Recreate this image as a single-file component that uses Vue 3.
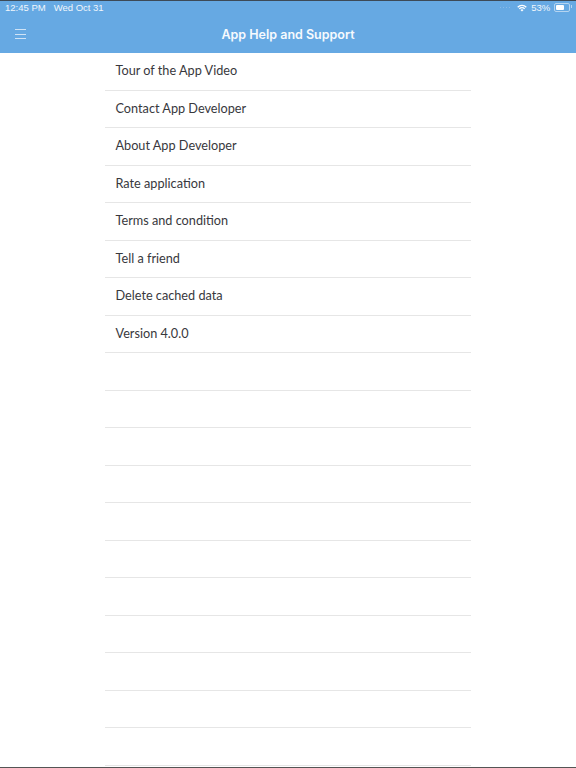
<script setup>
const items = [
  'Tour of the App Video',
  'Contact App Developer',
  'About App Developer',
  'Rate application',
  'Terms and condition',
  'Tell a friend',
  'Delete cached data',
  'Version 4.0.0',
  '', '', '', '', '', '', '', '', '', '', ''
]
</script>

<template>
  <div class="screen">
    <header class="header">
      <div class="status-bar">
        <div class="status-left">
          <span>12:45 PM</span>
          <span>Wed Oct 31</span>
        </div>
        <div class="status-right">
          <span class="signal">
            <i></i><i></i><i></i><i></i>
          </span>
          <svg class="wifi" width="10" height="8" viewBox="0 0 12 9">
            <path d="M0.3 3.1A8 8 0 0 1 11.7 3.1L10.6 4.2A6.4 6.4 0 0 0 1.4 4.2Z" fill="#fff" />
            <path d="M2.2 5A5.3 5.3 0 0 1 9.8 5L8.7 6.1A3.8 3.8 0 0 0 3.3 6.1Z" fill="#fff" />
            <path d="M4.1 6.9A2.7 2.7 0 0 1 7.9 6.9L6 8.8Z" fill="#fff" />
          </svg>
          <span class="percent">53%</span>
          <span class="battery"><span class="battery-level"></span></span>
        </div>
      </div>
      <div class="nav-bar">
        <button class="menu-btn" aria-label="Menu">
          <span></span><span></span><span></span>
        </button>
        <h1 class="title">App Help and Support</h1>
      </div>
    </header>

    <ul class="list">
      <li v-for="(item, i) in items" :key="i" class="row">{{ item }}</li>
    </ul>
  </div>
</template>

<style scoped>
.screen {
  position: relative;
  width: 576px;
  height: 768px;
  overflow: hidden;
  background-color: #fff;
  border-bottom: 1px solid #555;
  box-sizing: border-box;
  font-family: Lato, "Open Sans", sans-serif;
}

.header {
  height: 53px;
  background-color: #66a9e3;
  border-top: 1px solid #3d4a57;
  box-sizing: border-box;
  color: #fff;
}

.status-bar {
  display: flex;
  align-items: center;
  justify-content: space-between;
  height: 13px;
  padding: 0 5px;
  font-family: "Liberation Sans", sans-serif;
  font-size: 9.5px;
  color: #f0f6fc;
}

.status-left {
  display: flex;
  gap: 8px;
}

.status-right {
  display: flex;
  align-items: center;
  gap: 4px;
}

.signal {
  display: flex;
  gap: 1.5px;
  margin-right: 3px;
}

.signal i {
  width: 1.5px;
  height: 1.5px;
  border-radius: 50%;
  background-color: #94c0ea;
}

.percent {
  letter-spacing: -0.1px;
}

.battery {
  position: relative;
  display: block;
  width: 16px;
  height: 9px;
  margin-right: 1px;
  padding: 1px;
  border: 1px solid #b5d4f0;
  border-radius: 2px;
  box-sizing: border-box;
}

.battery::after {
  content: '';
  position: absolute;
  right: -3px;
  top: 1px;
  width: 1px;
  height: 3px;
  background-color: #b5d4f0;
}

.battery-level {
  display: block;
  width: 8px;
  height: 100%;
  border-radius: 1px;
  background-color: #fff;
}

.nav-bar {
  position: relative;
  display: flex;
  align-items: center;
  justify-content: center;
  height: 39px;
  padding-top: 2px;
  box-sizing: border-box;
}

.menu-btn {
  position: absolute;
  left: 15px;
  top: 15px;
  display: flex;
  flex-direction: column;
  gap: 3.5px;
  width: 11px;
  padding: 0;
  border: none;
  background: none;
}

.menu-btn span {
  display: block;
  height: 1px;
  background-color: #cfe3f6;
}

.title {
  margin: 0;
  font-family: Inter, "Liberation Sans", sans-serif;
  font-size: 12.5px;
  font-weight: 600;
  color: #f6fafe;
}

.list {
  width: 366px;
  margin: 0 auto;
  padding: 0;
  list-style: none;
}

.row {
  height: 37.5px;
  padding-left: 10.5px;
  border-bottom: 1px solid #e6e6e6;
  box-sizing: border-box;
  font-size: 12.7px;
  line-height: 35px;
  color: #38383d;
}
</style>
